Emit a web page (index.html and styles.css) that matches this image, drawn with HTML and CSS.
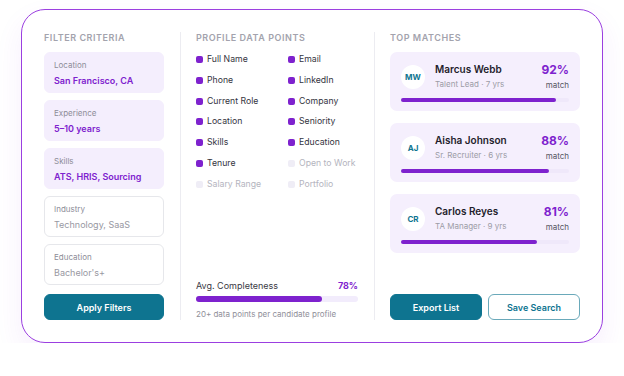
FILE: index.html
```html
<!doctype html>
<html>
<head>
    <title>Candidate Search</title>
    <meta charset="utf-8"/>
    <meta name="viewport" content="width=device-width, initial-scale=1"/>
    <link rel="stylesheet" href="styles.css">
</head>
<body>
<div class="panel">

    <section class="col filters">
        <h2 class="col-title">Filter Criteria</h2>
        <div class="field field-set">
            <span class="field-label">Location</span>
            <span class="field-value">San Francisco, CA</span>
        </div>
        <div class="field field-set">
            <span class="field-label">Experience</span>
            <span class="field-value">5–10 years</span>
        </div>
        <div class="field field-set">
            <span class="field-label">Skills</span>
            <span class="field-value">ATS, HRIS, Sourcing</span>
        </div>
        <div class="field">
            <span class="field-label">Industry</span>
            <span class="field-value">Technology, SaaS</span>
        </div>
        <div class="field">
            <span class="field-label">Education</span>
            <span class="field-value">Bachelor's+</span>
        </div>
        <button class="btn btn-primary btn-bottom">Apply Filters</button>
    </section>

    <div class="divider"></div>

    <section class="col points">
        <h2 class="col-title">Profile Data Points</h2>
        <ul class="point-list">
            <li class="point on">Full Name</li>
            <li class="point on">Email</li>
            <li class="point on">Phone</li>
            <li class="point on">LinkedIn</li>
            <li class="point on">Current Role</li>
            <li class="point on">Company</li>
            <li class="point on">Location</li>
            <li class="point on">Seniority</li>
            <li class="point on">Skills</li>
            <li class="point on">Education</li>
            <li class="point on">Tenure</li>
            <li class="point">Open to Work</li>
            <li class="point">Salary Range</li>
            <li class="point">Portfolio</li>
        </ul>
        <div class="completeness">
            <div class="comp-head">
                <span>Avg. Completeness</span>
                <strong>78%</strong>
            </div>
            <div class="track thick"><div class="fill" style="width: 78%"></div></div>
            <p class="comp-note">20+ data points per candidate profile</p>
        </div>
    </section>

    <div class="divider second"></div>

    <section class="col matches">
        <h2 class="col-title">Top Matches</h2>
        <div class="match">
            <div class="match-row">
                <span class="avatar">MW</span>
                <div class="person">
                    <span class="person-name">Marcus Webb</span>
                    <span class="person-role">Talent Lead · 7 yrs</span>
                </div>
                <div class="score">
                    <strong>92%</strong>
                    <span>match</span>
                </div>
            </div>
            <div class="track thin"><div class="fill" style="width: 92%"></div></div>
        </div>
        <div class="match">
            <div class="match-row">
                <span class="avatar">AJ</span>
                <div class="person">
                    <span class="person-name">Aisha Johnson</span>
                    <span class="person-role">Sr. Recruiter · 6 yrs</span>
                </div>
                <div class="score">
                    <strong>88%</strong>
                    <span>match</span>
                </div>
            </div>
            <div class="track thin"><div class="fill" style="width: 88%"></div></div>
        </div>
        <div class="match">
            <div class="match-row">
                <span class="avatar">CR</span>
                <div class="person">
                    <span class="person-name">Carlos Reyes</span>
                    <span class="person-role">TA Manager · 9 yrs</span>
                </div>
                <div class="score">
                    <strong>81%</strong>
                    <span>match</span>
                </div>
            </div>
            <div class="track thin"><div class="fill" style="width: 81%"></div></div>
        </div>
        <div class="actions btn-bottom">
            <button class="btn btn-primary">Export List</button>
            <button class="btn btn-outline">Save Search</button>
        </div>
    </section>

</div>
</body>
</html>
```

FILE: styles.css
```css
body {
background-color: #fff;
margin: 0;
padding: 0;
font-family: Inter, "Noto Sans", "Liberation Sans", sans-serif;
color: #2b2b36;
}
.panel {
display: grid;
grid-template-columns: 120px 2px 1fr 2px 190px;
column-gap: 15px;
width: 536px;
height: 288px;
margin: 9px 0 0 21px;
padding: 22px;
border: 1.5px solid #9b3fe0;
border-radius: 24px;
background-color: #fff;
box-shadow: 0 12px 28px rgba(147, 51, 234, 0.08);
}
.divider {
width: 1px;
justify-self: end;
background-color: #ececf1;
}
.divider.second {
justify-self: center;
}
.col {
display: flex;
flex-direction: column;
min-width: 0;
}
.col-title {
margin: 0 0 8px 0;
font-size: 9px;
line-height: 12px;
font-weight: 600;
letter-spacing: 0.55px;
text-transform: uppercase;
color: #a3a3ad;
}
.btn-bottom {
margin-top: auto;
}

/* filters */
.filters {
gap: 7px;
}
.filters .col-title {
margin-bottom: 1px;
}
.field {
display: flex;
flex-direction: column;
height: 41px;
box-sizing: border-box;
padding: 7px 9px 6px 9px;
border: 1px solid #e6e7eb;
border-radius: 6px;
}
.field-set {
background-color: #f4eefd;
border-color: #f4eefd;
}
.field-label {
font-size: 8px;
line-height: 11px;
color: #8d8d98;
}
.field-value {
margin-top: 3px;
font-size: 9px;
line-height: 14px;
color: #9898a2;
}
.field-set .field-value {
font-weight: 600;
color: #7e22ce;
}
.btn {
height: 26px;
border-radius: 6px;
border: 1px solid #0e7490;
font-family: inherit;
font-size: 9px;
font-weight: 600;
cursor: pointer;
}
.btn-primary {
background-color: #0e7490;
color: #fff;
}
.btn-outline {
background-color: #fff;
border-color: #6aa9ba;
color: #0e7490;
}

/* data points */
.point-list {
display: grid;
grid-template-columns: 92px 1fr;
row-gap: 7.8px;
margin: 1px 0 0 0;
padding: 0;
list-style: none;
}
.point {
display: flex;
align-items: center;
gap: 4px;
font-size: 8.7px;
line-height: 13px;
color: #b4b4be;
}
.point::before {
content: "";
width: 7px;
height: 7px;
border-radius: 2px;
background-color: #efedf6;
}
.point.on {
color: #34343e;
}
.point.on::before {
background-color: #7e22ce;
}
.comp-head {
display: flex;
justify-content: space-between;
font-size: 9px;
line-height: 13px;
color: #3a3a44;
}
.comp-head strong {
font-weight: 700;
color: #7e22ce;
}
.completeness {
margin-top: auto;
}
.track {
border-radius: 4px;
background-color: #f2ecfc;
}
.track.thick {
height: 6px;
margin-top: 4px;
}
.fill {
height: 100%;
border-radius: 4px;
background-color: #7e22ce;
}
.comp-note {
margin: 6px 0 0 0;
font-size: 8px;
line-height: 12px;
color: #8f8f99;
}

/* matches */
.matches {
gap: 12px;
}
.matches .col-title {
margin-bottom: -4px;
}
.match {
height: 59px;
box-sizing: border-box;
padding: 10px 11px 9px 11px;
border-radius: 7px;
background-color: #f5effd;
}
.match-row {
display: flex;
align-items: center;
height: 29px;
}
.avatar {
display: flex;
align-items: center;
justify-content: center;
width: 24px;
height: 24px;
margin-right: 10px;
border-radius: 50%;
background-color: #fff;
font-size: 8px;
font-weight: 700;
color: #0e7490;
}
.person {
display: flex;
flex-direction: column;
align-self: flex-start;
flex: 1;
}
.person-name {
font-size: 10px;
line-height: 14px;
font-weight: 600;
color: #1f1d2b;
}
.person-role {
margin-top: 2px;
font-size: 8px;
line-height: 12px;
color: #9c9ca6;
}
.score {
display: flex;
flex-direction: column;
align-items: flex-end;
align-self: flex-start;
}
.score strong {
font-size: 12px;
line-height: 16px;
font-weight: 700;
color: #7e22ce;
}
.score span {
margin-top: 1px;
font-size: 8px;
line-height: 12px;
color: #55555f;
}
.track.thin {
height: 4px;
margin-top: 7px;
background-color: #efe8fa;
}
.actions {
display: flex;
gap: 6px;
}
.actions .btn {
flex: 1;
}
```
